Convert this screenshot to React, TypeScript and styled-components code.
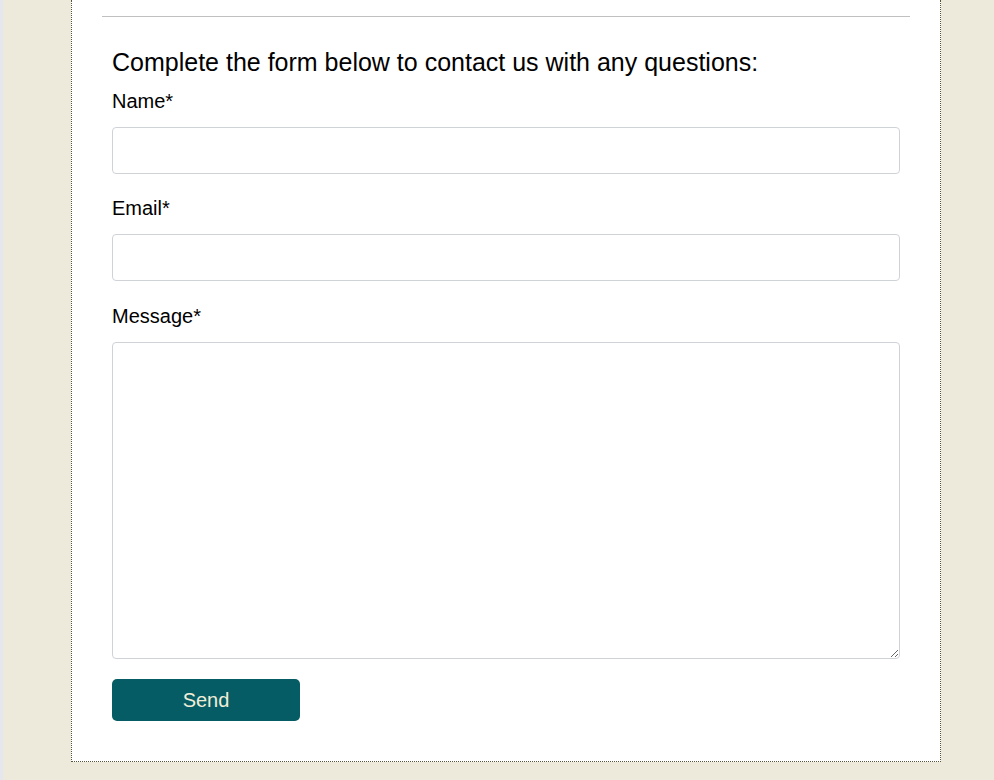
import React from "react";
import styled, { createGlobalStyle } from "styled-components";

const Global = createGlobalStyle`
  html, body { margin: 0; padding: 0; }
  body {
    background: #edeadb;
    font-family: "Liberation Sans", Arial, sans-serif;
    color: #000;
  }
  * { box-sizing: border-box; }
`;

const Page = styled.div`
  display: flex;
  min-height: 780px;
  background: #edeadb;
`;

const Strip = styled.div`
  width: 3px;
  flex: none;
  background: #e4e8ee;
`;

const Column = styled.div`
  padding-left: 68px;
  padding-bottom: 18px;
`;

const Card = styled.div`
  width: 870px;
  background: #fff;
  border: 1px dotted #55553a;
  border-top: none;
  padding: 16px 30px 40px;
`;

const Rule = styled.hr`
  margin: 0;
  border: none;
  border-top: 1px solid #c0c0c0;
`;

const Form = styled.form`
  display: flex;
  flex-direction: column;
  padding: 0 10px;
`;

const Heading = styled.p`
  margin: 31px 0 0;
  font-size: 25px;
  line-height: 29px;
`;

const Label = styled.label<{ $top: number }>`
  display: block;
  margin-top: ${(p) => p.$top}px;
  font-size: 20px;
  line-height: 24px;
`;

const Input = styled.input`
  display: block;
  width: 100%;
  height: 47px;
  margin-top: 14px;
  border: 1px solid #cfd3d8;
  border-radius: 4px;
  background: #fff;
  font-family: inherit;
  font-size: 18px;
  padding: 0 12px;
`;

const TextArea = styled.textarea`
  display: block;
  width: 100%;
  height: 317px;
  margin-top: 14px;
  border: 1px solid #cfd3d8;
  border-radius: 4px;
  background: #fff;
  font-family: inherit;
  font-size: 18px;
  padding: 12px;
`;

const Button = styled.button`
  width: 188px;
  height: 42px;
  margin-top: 20px;
  border: none;
  border-radius: 5px;
  background: #055c64;
  color: #f1edd8;
  font-family: inherit;
  font-size: 20px;
  cursor: pointer;
`;

export default function App() {
  return (
    <>
      <Global />
      <Page>
        <Strip />
        <Column>
          <Card>
            <Rule />
            <Form onSubmit={(e) => e.preventDefault()}>
              <Heading>Complete the form below to contact us with any questions:</Heading>
              <Label $top={12} htmlFor="name">Name*</Label>
              <Input id="name" type="text" />
              <Label $top={22} htmlFor="email">Email*</Label>
              <Input id="email" type="email" />
              <Label $top={23} htmlFor="message">Message*</Label>
              <TextArea id="message" />
              <div>
                <Button type="submit">Send</Button>
              </div>
            </Form>
          </Card>
        </Column>
      </Page>
    </>
  );
}
